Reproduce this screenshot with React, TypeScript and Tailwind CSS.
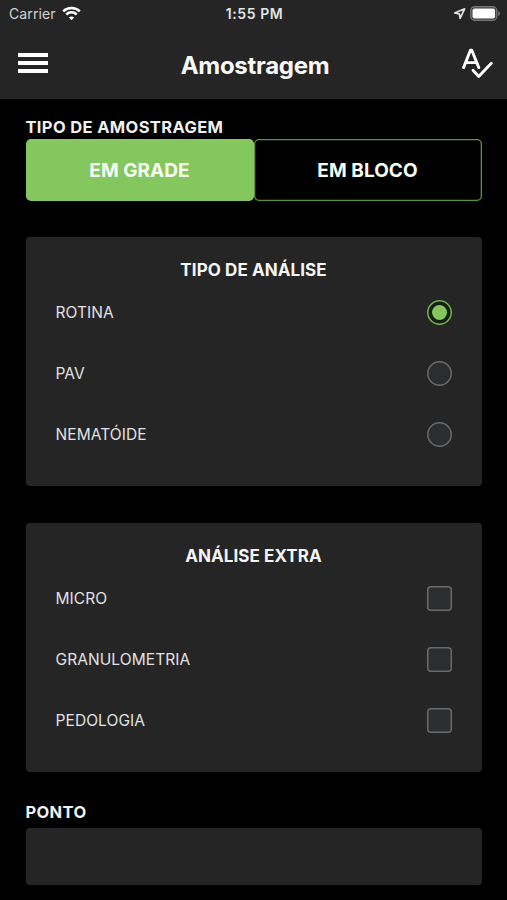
import { useState } from "react";

const tipos = ["ROTINA", "PAV", "NEMATÓIDE"];
const extras = ["MICRO", "GRANULOMETRIA", "PEDOLOGIA"];

const StatusBar = () => (
  <div className="grid h-7 grid-cols-3 items-center pl-[9px] pr-[7px]">
    <div className="flex items-center gap-[6px]">
      <span className="text-[14px] leading-none tracking-[0.1px] text-[#d2d2d2]">Carrier</span>
      <svg className="-mt-[2px]" width="19" height="15" viewBox="0 0 19 15" fill="none" stroke="#fff" strokeWidth="2.5">
        <path d="M1.2 5.3a11.8 11.8 0 0 1 16.6 0" />
        <path d="M4.3 8.5a7.4 7.4 0 0 1 10.4 0" />
        <path d="M9.5 14.3l-2.6-2.7a3.8 3.8 0 0 1 5.2 0z" fill="#fff" stroke="none" />
      </svg>
    </div>
    <span className="whitespace-nowrap text-center text-[14px] font-semibold leading-none tracking-[0.6px] text-[#e4e4e4]">
      1:55 PM
    </span>
    <div className="-mt-[2px] flex items-center justify-end gap-[4px]">
      <svg width="13" height="13" viewBox="0 0 13 13" fill="none" stroke="#e0e0e0" strokeWidth="1.7" strokeLinejoin="round">
        <path d="M11.6 1.8L1.6 6l4.7.8.8 4.6z" />
      </svg>
      <svg width="30" height="15" viewBox="0 0 30 15">
        <rect x="0.8" y="0.8" width="26" height="13.4" rx="4" fill="#333" stroke="#777" strokeWidth="1.4" />
        <rect x="2.5" y="2.5" width="22.6" height="10" rx="2" fill="#fff" />
        <path d="M28.2 5v5c1.2-.5 1.7-1.4 1.7-2.5S29.4 5.5 28.2 5z" fill="#777" />
      </svg>
    </div>
  </div>
);

const Header = () => (
  <header className="h-[98.5px] bg-[#252525]">
    <StatusBar />
    <div className="flex h-[71px] items-center justify-between pl-[18px] pr-[13px]">
      <button className="mb-px flex w-[30px] flex-col gap-[4px]" aria-label="Menu">
        <span className="h-[4px] w-full bg-white" />
        <span className="h-[4px] w-full bg-white" />
        <span className="h-[4px] w-full bg-white" />
      </button>
      <h1 className="pt-[4px] text-[24px] font-bold leading-none tracking-[-0.3px] text-[#f8f8f8]">Amostragem</h1>
      <button aria-label="Verificar">
        <svg width="32" height="32" viewBox="0 0 32 32" fill="none" stroke="#fff" strokeWidth="2.9" strokeLinecap="round" strokeLinejoin="round">
          <path d="M1.6 19.6L8.4 2.2h1.4L16.8 19.6M4.2 14.6h10" />
          <path d="M11 22.3l5.7 6.2L29.3 15.2" />
        </svg>
      </button>
    </div>
  </header>
);

interface CardProps {
  title: string;
  children: React.ReactNode;
}

const Card = ({ title, children }: CardProps) => (
  <section className="h-[248.5px] rounded bg-[#252525] px-[30px] pt-[22px]">
    <h2 className="text-center text-[17px] font-bold leading-[22px] tracking-[0.08px] text-[#f5f5f5]">{title}</h2>
    <div className="mt-px flex flex-col">{children}</div>
  </section>
);

const App = () => {
  const [modo, setModo] = useState("EM GRADE");
  const [tipo, setTipo] = useState("ROTINA");
  const [marcados, setMarcados] = useState<string[]>([]);

  const toggle = (item: string) =>
    setMarcados(marcados.includes(item) ? marcados.filter((m) => m !== item) : [...marcados, item]);

  return (
    <div className="h-[900px] w-[507px] overflow-hidden bg-black font-['Inter',sans-serif]">
      <Header />
      <main className="px-[25.5px] pt-[17.5px]">
        <p className="text-[16.5px] font-bold leading-[23px] tracking-[0.36px] text-[#f0f0f0]">TIPO DE AMOSTRAGEM</p>
        <div className="flex h-[61.5px]">
          {["EM GRADE", "EM BLOCO"].map((m) => (
            <button
              key={m}
              onClick={() => setModo(m)}
              className={
                "flex-1 rounded-[5px] pt-[3px] text-[19px] font-bold tracking-[0.06px] text-[#f8fff4] " +
                (modo === m ? "bg-[#84c75f]" : "bg-black shadow-[inset_0_0_0_1.3px_#5c943e]")
              }
            >
              {m}
            </button>
          ))}
        </div>

        <div className="mt-[36.5px] flex flex-col gap-[37.5px]">
          <Card title="TIPO DE ANÁLISE">
            {tipos.map((t) => (
              <div key={t} className="flex h-[61px] items-center justify-between" onClick={() => setTipo(t)}>
                <span className="pt-px text-[15.5px] tracking-[0.08px] text-[#e2e2e2]">{t}</span>
                <span
                  className={
                    "flex size-[25px] items-center justify-center rounded-full " +
                    (tipo === t
                      ? "bg-[#17200f] shadow-[inset_0_0_0_1.5px_#76b355]"
                      : "bg-[#2b2d2e] shadow-[inset_0_0_0_1.5px_#6a6a6a]")
                  }
                >
                  {tipo === t && <span className="size-[15px] rounded-full bg-[#84c75f]" />}
                </span>
              </div>
            ))}
          </Card>

          <Card title="ANÁLISE EXTRA">
            {extras.map((e) => (
              <div key={e} className="flex h-[61px] items-center justify-between" onClick={() => toggle(e)}>
                <span className="pt-px text-[15.5px] tracking-[0.08px] text-[#e2e2e2]">{e}</span>
                <span
                  className={
                    "size-[25px] rounded-[4px] shadow-[inset_0_0_0_1.5px_#6a6a6a] " +
                    (marcados.includes(e) ? "bg-[#84c75f]" : "bg-[#2b2d2e]")
                  }
                />
              </div>
            ))}
          </Card>
        </div>

        <label className="mt-[29px] block">
          <span className="block text-[16.5px] font-bold leading-[23px] tracking-[0.36px] text-[#f0f0f0]">PONTO</span>
          <input className="mt-[4px] block h-[57px] w-full rounded bg-[#252525] px-4 text-white outline-none" />
        </label>
      </main>
    </div>
  );
};

export default App;
